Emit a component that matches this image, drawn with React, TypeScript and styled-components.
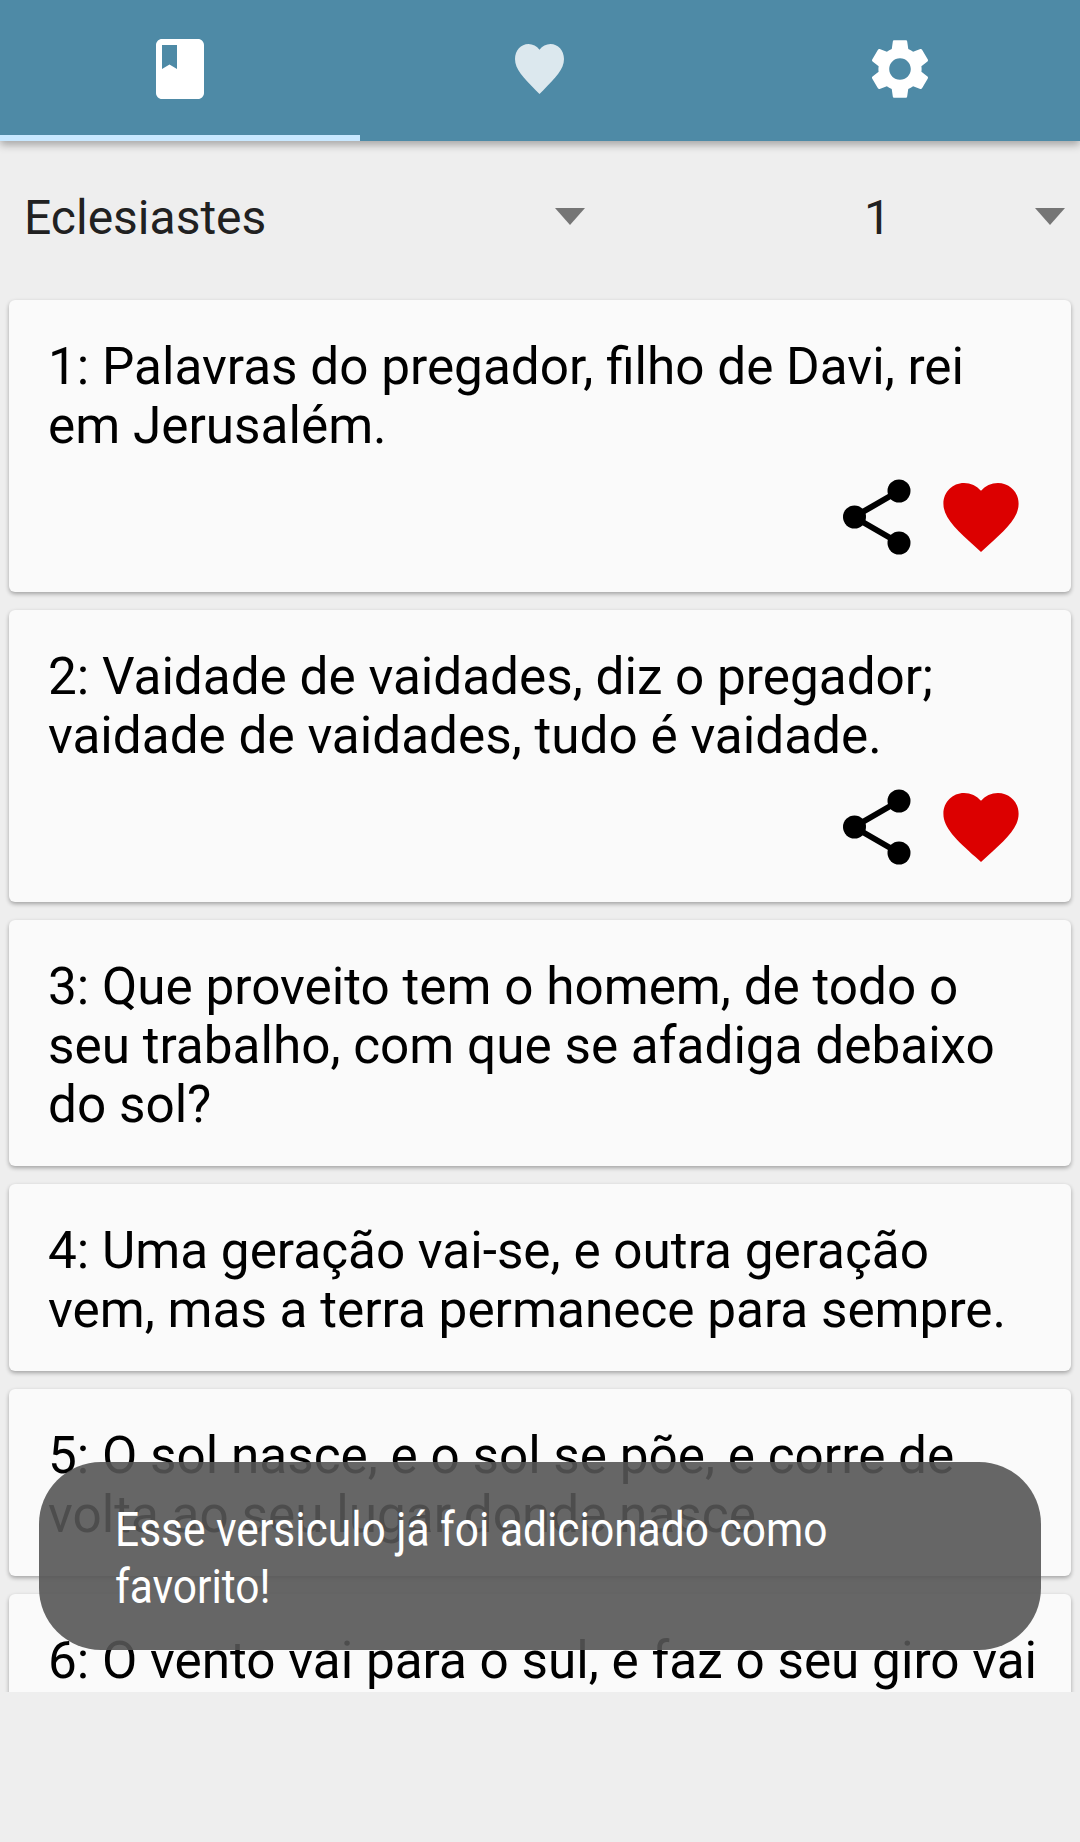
import React from 'react';
import styled, { createGlobalStyle } from 'styled-components';

const GlobalStyle = createGlobalStyle`
	html, body {
		margin: 0;
		padding: 0;
		background: #eeeeee;
		font-family: Roboto, "Liberation Sans", sans-serif;
	}
`;

const Screen = styled.div`
	position: relative;
	width: 1080px;
	height: 1842px;
	overflow: hidden;
	background: #eeeeee;
`;

const TabBar = styled.div`
	position: relative;
	z-index: 2;
	display: flex;
	height: 141px;
	background: #4e8aa6;
	box-shadow: 0 4px 8px rgba(0, 0, 0, 0.3);
`;

const Tab = styled.div<{ $active?: boolean }>`
	flex: 1;
	display: flex;
	align-items: flex-start;
	justify-content: center;
	padding-top: 33px;
	box-sizing: border-box;
	border-bottom: 6px solid ${(p) => (p.$active ? '#c8e8ff' : 'transparent')};

	svg {
		display: block;
	}
`;

const Content = styled.div`
	height: 1551px;
	overflow: hidden;
`;

const PickerRow = styled.div`
	display: grid;
	grid-template-columns: 600px 480px;
	height: 159px;
	box-sizing: border-box;
`;

const Picker = styled.div<{ $indent: number }>`
	display: flex;
	align-items: center;
	justify-content: space-between;
	padding: 0 15px 7px ${(p) => p.$indent}px;
	font-size: 48px;
	color: #212121;
`;

const Caret = styled.div`
	width: 0;
	height: 0;
	margin-bottom: 1px;
	border-left: 15px solid transparent;
	border-right: 15px solid transparent;
	border-top: 17px solid #757575;
`;

const VerseList = styled.div`
	display: flex;
	flex-direction: column;
	gap: 18px;
	padding: 0 9px;
`;

const Card = styled.div`
	flex-shrink: 0;
	padding: 37px 30px 32px 39px;
	background: #fafafa;
	border-radius: 6px;
	box-shadow: 0 2px 4px rgba(0, 0, 0, 0.32);
`;

const VerseText = styled.div`
	font-size: 51.3px;
	line-height: 59px;
	color: #000;
`;

const Actions = styled.div`
	display: flex;
	justify-content: flex-end;
	align-items: center;
	gap: 32px;
	margin-top: 24px;
	height: 76px;
	padding-right: 22px;
	margin-bottom: 5px;
`;

const Toast = styled.div`
	position: absolute;
	left: 39px;
	right: 39px;
	top: 1462px;
	height: 188px;
	box-sizing: border-box;
	padding: 39px 0 0 76px;
	border-radius: 62px;
	background: rgba(85, 85, 85, 0.9);
	z-index: 3;
`;

const ToastText = styled.div`
	width: 860px;
	font-size: 48px;
	line-height: 57px;
	color: #fff;
	transform: scaleX(0.885);
	transform-origin: left top;
`;

const BookIcon = () => (
	<svg width="72" height="72" viewBox="0 0 24 24" fill="#fff">
		<path d="M18 2H6c-1.1 0-2 .9-2 2v16c0 1.1.9 2 2 2h12c1.1 0 2-.9 2-2V4c0-1.1-.9-2-2-2zM6 4h5v8l-2.5-1.5L6 12V4z" />
	</svg>
);

const heartPath =
	'M12 21.35l-1.45-1.32C5.4 15.36 2 12.28 2 8.5 2 5.42 4.42 3 7.5 3c1.74 0 3.41.81 4.5 2.09C13.09 3.81 14.76 3 16.5 3 19.58 3 22 5.42 22 8.5c0 3.78-3.4 6.86-8.55 11.54L12 21.35z';

const HeartTabIcon = styled.svg`
	width: 49px;
	height: 50px;
	margin-top: 11px;
	margin-left: -1px;
	fill: #dce8ee;
`;

const TabHeart = () => (
	<HeartTabIcon viewBox="2 3 20 18.35" preserveAspectRatio="none">
		<path d={heartPath} />
	</HeartTabIcon>
);

const GearIcon = () => (
	<svg width="72" height="72" viewBox="0 0 24 24" fill="#fff">
		<path d="M19.14 12.94c.04-.3.06-.61.06-.94 0-.32-.02-.64-.07-.94l2.03-1.58c.18-.14.23-.41.12-.61l-1.92-3.32c-.12-.22-.37-.29-.59-.22l-2.39.96c-.5-.38-1.03-.7-1.62-.94l-.36-2.54c-.04-.24-.24-.41-.48-.41h-3.84c-.24 0-.43.17-.47.41l-.36 2.54c-.59.24-1.13.57-1.62.94l-2.39-.96c-.22-.08-.47 0-.59.22L2.74 8.87c-.12.21-.08.47.12.61l2.03 1.58c-.05.3-.09.63-.09.94s.02.64.07.94l-2.03 1.58c-.18.14-.23.41-.12.61l1.92 3.32c.12.22.37.29.59.22l2.39-.96c.5.38 1.03.7 1.62.94l.36 2.54c.05.24.24.41.48.41h3.84c.24 0 .44-.17.47-.41l.36-2.54c.59-.24 1.13-.56 1.62-.94l2.39.96c.22.08.47 0 .59-.22l1.92-3.32c.12-.22.07-.47-.12-.61l-2.01-1.58zM12 15.6c-1.98 0-3.6-1.62-3.6-3.6s1.62-3.6 3.6-3.6 3.6 1.62 3.6 3.6-1.62 3.6-3.6 3.6z" />
	</svg>
);

const ShareIcon = () => (
	<svg width="68" height="76" viewBox="0 0 68 76" fill="#000">
		<path d="M11 38 L56 12 M11 38 L56 64" stroke="#000" strokeWidth="6" fill="none" />
		<circle cx="56" cy="12" r="11.5" />
		<circle cx="11.5" cy="38" r="11.5" />
		<circle cx="56" cy="64" r="11.5" />
	</svg>
);

const RedHeart = () => (
	<svg width="76" height="69" viewBox="2 3 20 18.35" fill="#dc0000">
		<path d={heartPath} />
	</svg>
);

const verses = [
	{ text: '1: Palavras do pregador, filho de Davi, rei em Jerusalém.', actions: true },
	{ text: '2: Vaidade de vaidades, diz o pregador; vaidade de vaidades, tudo é vaidade.', actions: true },
	{ text: '3: Que proveito tem o homem, de todo o seu trabalho, com que se afadiga debaixo do sol?' },
	{ text: '4: Uma geração vai-se, e outra geração vem, mas a terra permanece para sempre.' },
	{ text: '5: O sol nasce, e o sol se põe, e corre de volta ao seu lugar donde nasce.' },
	{ text: '6: O vento vai para o sul, e faz o seu giro vai' },
];

export default function App() {
	return (
		<Screen>
			<GlobalStyle />
			<TabBar>
				<Tab $active><BookIcon /></Tab>
				<Tab><TabHeart /></Tab>
				<Tab><GearIcon /></Tab>
			</TabBar>
			<Content>
				<PickerRow>
					<Picker $indent={24}>Eclesiastes<Caret /></Picker>
					<Picker $indent={264}>1<Caret /></Picker>
				</PickerRow>
				<VerseList>
					{verses.map((v) => (
						<Card key={v.text}>
							<VerseText>{v.text}</VerseText>
							{v.actions && (
								<Actions>
									<ShareIcon />
									<RedHeart />
								</Actions>
							)}
						</Card>
					))}
				</VerseList>
			</Content>
			<Toast>
				<ToastText>Esse versiculo já foi adicionado como favorito!</ToastText>
			</Toast>
		</Screen>
	);
}
